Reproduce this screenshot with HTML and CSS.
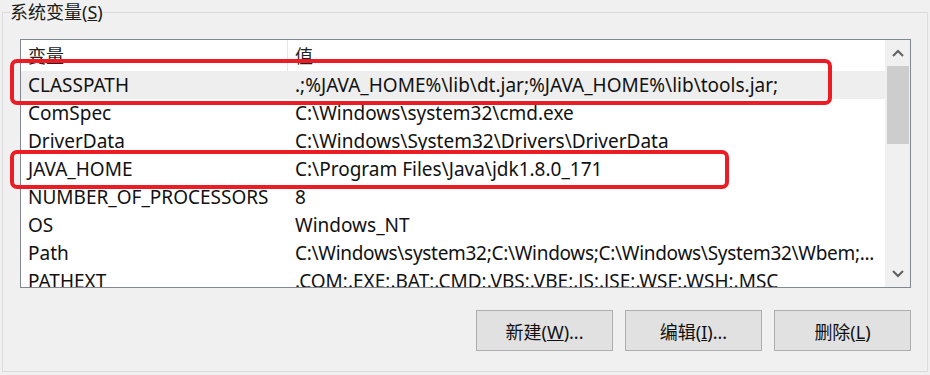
FILE: index.html
```html
<!DOCTYPE html>
<html lang="zh-CN">
<head>
  <meta charset="UTF-8">
  <title>系统变量</title>
  <link rel="stylesheet" href="styles.css">
</head>
<body>

  <fieldset class="group">
    <legend>系统变量(<u>S</u>)</legend>

    <div class="listview">
      <div class="table">
        <div class="row head">
          <div class="cell name">变量</div>
          <div class="cell value">值</div>
        </div>
        <div class="row picked">
          <div class="cell name">CLASSPATH</div>
          <div class="cell value">.;%JAVA_HOME%\lib\dt.jar;%JAVA_HOME%\lib\tools.jar;</div>
        </div>
        <div class="row">
          <div class="cell name">ComSpec</div>
          <div class="cell value">C:\Windows\system32\cmd.exe</div>
        </div>
        <div class="row">
          <div class="cell name">DriverData</div>
          <div class="cell value">C:\Windows\System32\Drivers\DriverData</div>
        </div>
        <div class="row">
          <div class="cell name">JAVA_HOME</div>
          <div class="cell value">C:\Program Files\Java\jdk1.8.0_171</div>
        </div>
        <div class="row">
          <div class="cell name">NUMBER_OF_PROCESSORS</div>
          <div class="cell value">8</div>
        </div>
        <div class="row">
          <div class="cell name">OS</div>
          <div class="cell value">Windows_NT</div>
        </div>
        <div class="row">
          <div class="cell name">Path</div>
          <div class="cell value tight">C:\Windows\system32;C:\Windows;C:\Windows\System32\Wbem;...</div>
        </div>
        <div class="row">
          <div class="cell name">PATHEXT</div>
          <div class="cell value">.COM;.EXE;.BAT;.CMD;.VBS;.VBE;.JS;.JSE;.WSF;.WSH;.MSC</div>
        </div>
      </div>

      <div class="scrollbar">
        <div class="arrow up">
          <svg width="12" height="8" viewBox="0 0 12 8"><path d="M1 7 L6 2 L11 7" fill="none" stroke="#606060" stroke-width="2"/></svg>
        </div>
        <div class="thumb"></div>
        <div class="track"></div>
        <div class="arrow down">
          <svg width="12" height="8" viewBox="0 0 12 8"><path d="M1 1 L6 6 L11 1" fill="none" stroke="#606060" stroke-width="2"/></svg>
        </div>
      </div>
    </div>

    <div class="buttons">
      <button>新建(<u>W</u>)...</button>
      <button>编辑(<u>I</u>)...</button>
      <button>删除(<u>L</u>)</button>
    </div>
  </fieldset>

  <!-- red highlight marks drawn over the list -->
  <div class="mark mark-classpath"></div>
  <div class="mark mark-javahome"></div>

</body>
</html>
```

FILE: styles.css
```css
/* General Styles */
body {
  margin: 0;
  background-color: #f0f0f0;
  font-family: 'Noto Sans', 'Noto Sans CJK SC', sans-serif;
  font-size: 18px;
  color: #000;
  width: 930px;
  height: 375px;
  overflow: hidden;
  position: relative;
}

.group {
  margin: 0 2px;
  padding: 0;
  height: 372px;
  box-sizing: border-box;
  border: 1px solid #dcdcdc;
  min-width: 0;
}

.group legend {
  margin-left: 7px;
  padding: 0;
  height: 24px;
  line-height: 24px;
  font-size: 18px;
  color: #1a1a1a;
}

.listview {
  margin: 15px 0 0 17px;
  width: 891px;
  height: 249px;
  box-sizing: border-box;
  border: 1px solid #828790;
  background-color: #fff;
  display: flex;
}

.table {
  flex: 1;
  overflow: hidden;
}

.row {
  display: flex;
  height: 28px;
  align-items: center;
  white-space: nowrap;
}

.row.head {
  height: 31px;
  align-items: flex-start;
}

.row.head .cell {
  padding-top: 2px;
  font-size: 18px;
  color: #222;
}

.row.head .name {
  border-right: 1px solid #e5e5e5;
  height: 31px;
  box-sizing: border-box;
}

.row.picked {
  background-color: #eeeeee;
}

.cell {
  padding-left: 7px;
  font-size: 19px;
  color: #111;
}

.cell.name {
  width: 267px;
  box-sizing: border-box;
  flex-shrink: 0;
}

.cell.tight {
  letter-spacing: -0.3px;
}

.scrollbar {
  width: 25px;
  background-color: #f0f0f0;
  display: flex;
  flex-direction: column;
  padding: 0 1px 0 2px;
  box-sizing: border-box;
}

.arrow {
  height: 26px;
  display: flex;
  align-items: center;
  justify-content: center;
}

.thumb {
  height: 78px;
  background-color: #cdcdcd;
}

.track {
  flex: 1;
}

.buttons {
  display: flex;
  justify-content: flex-end;
  gap: 12px;
  margin: 22px 16px 0 0;
}

.buttons button {
  width: 137px;
  height: 41px;
  background-color: #e1e1e1;
  border: 1px solid #adadad;
  font-family: 'Noto Sans', 'Noto Sans CJK SC', sans-serif;
  font-size: 18px;
  color: #111;
  padding: 0;
}

.mark {
  position: absolute;
  border: 4px solid #ec1c24;
  border-radius: 7px;
  box-sizing: border-box;
}

.mark-classpath {
  left: 10px;
  top: 59px;
  width: 822px;
  height: 46px;
}

.mark-javahome {
  left: 10px;
  top: 150px;
  width: 719px;
  height: 39px;
}
```
